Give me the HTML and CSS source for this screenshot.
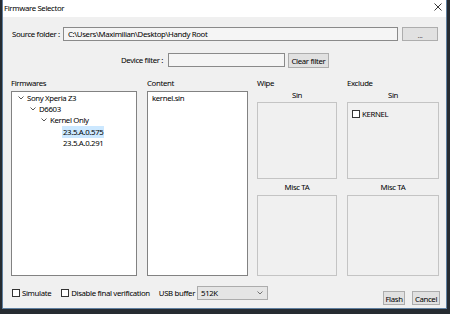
FILE: index.html
```html
<!DOCTYPE html>
<html lang="en">
<head>
    <meta charset="UTF-8">
    <title>Firmware Selector</title>
    <link rel="stylesheet" href="styles.css">
</head>
<body>
    <div class="window">
        <div class="titlebar">
            <span class="title">Firmware Selector</span>
            <svg class="close" width="8" height="8" viewBox="0 0 8 8"><path d="M0.5 0.5 L7.5 7.5 M7.5 0.5 L0.5 7.5" stroke="#222" stroke-width="0.9"/></svg>
        </div>
        <div class="content">
            <div class="row source-row">
                <span class="label">Source folder :</span>
                <div class="input source-input">C:\Users\Maximilian\Desktop\Handy Root</div>
                <div class="btn browse-btn">...</div>
            </div>
            <div class="row filter-row">
                <span class="label filter-label">Device filter :</span>
                <div class="input filter-input"></div>
                <div class="btn clear-btn">Clear filter</div>
            </div>
            <div class="panels">
                <div class="panel firmwares">
                    <div class="head">Firmwares</div>
                    <div class="list">
                        <div class="node lvl0"><svg class="chev" width="6" height="4" viewBox="0 0 6 4"><path d="M0.5 0.5 L3 3 L5.5 0.5" fill="none" stroke="#444" stroke-width="0.9"/></svg>Sony Xperia Z3</div>
                        <div class="node lvl1"><svg class="chev" width="6" height="4" viewBox="0 0 6 4"><path d="M0.5 0.5 L3 3 L5.5 0.5" fill="none" stroke="#444" stroke-width="0.9"/></svg>D6603</div>
                        <div class="node lvl2"><svg class="chev" width="6" height="4" viewBox="0 0 6 4"><path d="M0.5 0.5 L3 3 L5.5 0.5" fill="none" stroke="#444" stroke-width="0.9"/></svg>Kernel Only</div>
                        <div class="node lvl3"><span class="selected">23.5.A.0.575</span></div>
                        <div class="node lvl3"><span>23.5.A.0.291</span></div>
                    </div>
                </div>
                <div class="panel contents">
                    <div class="head">Content</div>
                    <div class="list">
                        <div class="file">kernel.sin</div>
                    </div>
                </div>
                <div class="panel wipe">
                    <div class="head">Wipe</div>
                    <div class="sub">Sin</div>
                    <div class="group"></div>
                    <div class="sub sub-misc">Misc TA</div>
                    <div class="group group-misc"></div>
                </div>
                <div class="panel exclude">
                    <div class="head">Exclude</div>
                    <div class="sub">Sin</div>
                    <div class="group">
                        <div class="check-item"><span class="box"></span>KERNEL</div>
                    </div>
                    <div class="sub sub-misc">Misc TA</div>
                    <div class="group group-misc"></div>
                </div>
            </div>
            <div class="footer">
                <div class="check-item simulate"><span class="box"></span>Simulate</div>
                <div class="check-item verify"><span class="box"></span>Disable final verification</div>
                <span class="usb-label">USB buffer</span>
                <div class="select">512K<svg width="6" height="4" viewBox="0 0 6 4"><path d="M0.5 0.5 L3 3 L5.5 0.5" fill="none" stroke="#555" stroke-width="0.8"/></svg></div>
                <div class="spacer"></div>
                <div class="btn action flash">Flash</div>
                <div class="btn action cancel">Cancel</div>
            </div>
        </div>
    </div>
</body>
</html>
```

FILE: styles.css
```css
body {
    margin: 0;
    background-color: #262b31;
    font-family: "Noto Sans", "Open Sans", sans-serif;
    font-size: 7.8px;
    letter-spacing: -0.35px;
    color: #000;
    height: 314px;
    overflow: hidden;
    white-space: nowrap;
}
.window {
    width: 443px;
    height: 308px;
    margin-left: 2px;
    background: #f0f0f0;
    border: 1px solid #5f7f9f;
    border-top: none;
    display: flex;
    flex-direction: column;
}
.titlebar {
    height: 17px;
    background: white;
    display: flex;
    align-items: center;
    padding: 0 4px 0 1px;
}
.title {
    flex: 1;
    margin-top: -2px;
}
.close {
    margin-top: -3px;
}
.content {
    flex: 1;
    padding: 10px 7px 0 8px;
    display: flex;
    flex-direction: column;
}
.row {
    display: flex;
    align-items: center;
    height: 14px;
}
.label {
    margin-left: 1px;
    width: 51px;
}
.input {
    height: 12px;
    border: 1px solid #8a8a8a;
    background: #f5f5f5;
    line-height: 12px;
    padding-left: 4px;
}
.source-input {
    flex: 1;
    margin-right: 4px;
}
.btn {
    background: #e1e1e1;
    border: 1px solid #adadad;
    height: 14px;
    line-height: 14px;
    text-align: center;
    box-sizing: border-box;
}
.browse-btn {
    width: 36px;
    margin-right: 1px;
    color: #666;
}
.filter-row {
    margin-top: 12px;
}
.filter-label {
    margin-left: 107px;
    width: 45px;
    text-align: right;
    margin-right: 5px;
}
.filter-input {
    width: 111px;
    margin-right: 3px;
}
.clear-btn {
    width: 41px;
    height: 15px;
    line-height: 15px;
}
.panels {
    display: flex;
    margin-top: 11px;
    height: 198px;
}
.panel {
    display: flex;
    flex-direction: column;
}
.head {
    height: 13px;
    line-height: 10px;
}
.firmwares {
    width: 126px;
}
.contents {
    width: 101px;
    margin-left: 10px;
}
.wipe {
    width: 80px;
    margin-left: 9px;
}
.exclude {
    width: 92px;
    margin-left: 10px;
}
.list {
    flex: 1;
    background: white;
    border: 1px solid #828282;
}
.node {
    height: 11.4px;
    display: flex;
    align-items: center;
}
.chev {
    margin-right: 3px;
}
.lvl0 { padding-left: 6px; }
.lvl1 { padding-left: 18px; }
.lvl2 { padding-left: 29px; }
.lvl3 { padding-left: 51px; }
.selected {
    background: #cce8ff;
    padding: 1px 1px;
    margin-left: -1px;
}
.file {
    padding: 1px 0 0 4px;
    height: 11px;
    line-height: 11px;
}
.sub {
    text-align: center;
    height: 11px;
    line-height: 8px;
}
.sub-misc {
    height: 16px;
    line-height: 17px;
}
.group {
    height: 77px;
    box-sizing: border-box;
    border: 1px solid #c4c4c4;
}
.group-misc {
    height: auto;
    flex: 1;
}
.group .check-item {
    margin: 6px 0 0 4px;
}
.check-item {
    display: flex;
    align-items: center;
}
.box {
    width: 6px;
    height: 6px;
    border: 1px solid #333;
    background: white;
    margin-right: 2px;
}
.footer {
    display: flex;
    align-items: flex-start;
    margin-top: 9px;
    margin-right: -1px;
    padding-left: 1px;
}
.simulate {
    margin-top: 3px;
    margin-right: 10px;
}
.verify {
    margin-top: 3px;
    margin-right: 9px;
}
.usb-label {
    margin-top: 3px;
    margin-right: 2px;
}
.select {
    width: 62px;
    height: 12px;
    line-height: 12px;
    margin-top: 1px;
    padding: 0 4px 0 3px;
    background: #e5e5e5;
    border: 1px solid #acacac;
    display: flex;
    align-items: center;
    justify-content: space-between;
}
.spacer {
    flex: 1;
}
.action {
    margin-top: 6px;
}
.flash {
    width: 22px;
}
.cancel {
    width: 28px;
    margin-left: 7px;
}
```
